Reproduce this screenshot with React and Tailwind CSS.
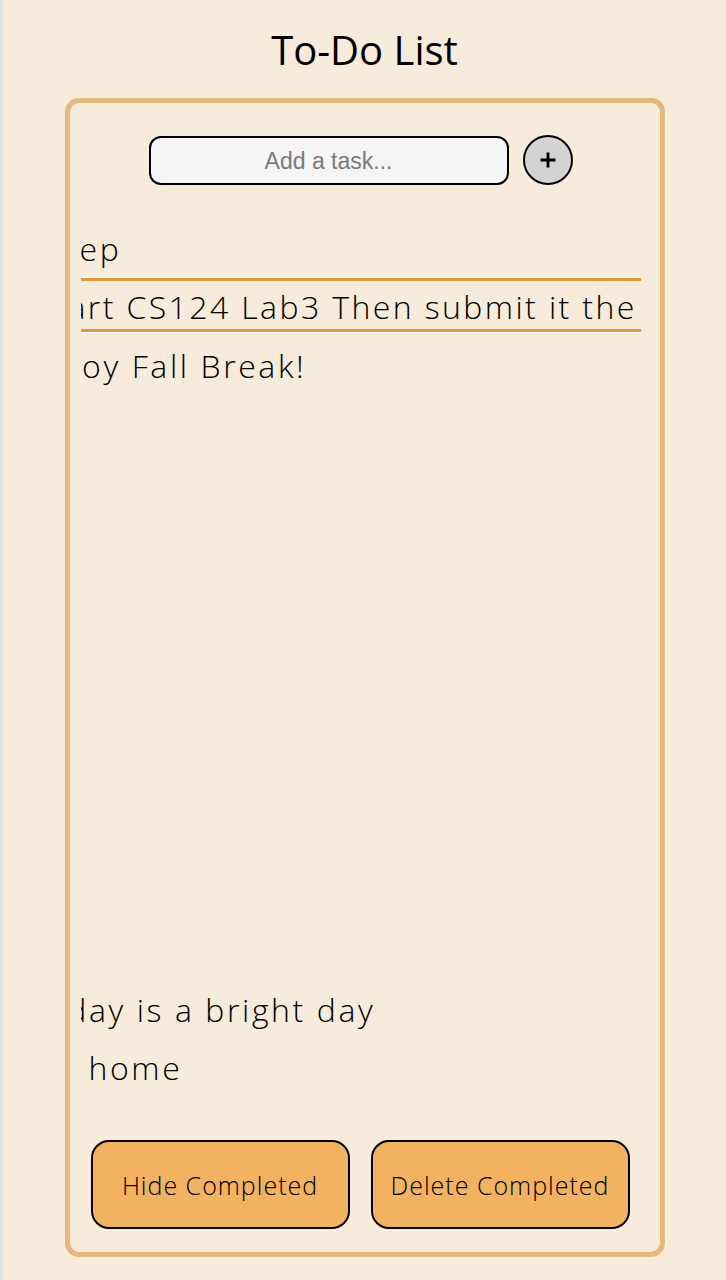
import React, { useState } from "react";

const tasks = [
  { id: 1, text: "Sleep", shift: "ml-[-51px]", row: "h-[57px]" },
  { id: 2, text: "Start CS124 Lab3 Then submit it the", shift: "ml-[-45px]", selected: true },
  { id: 3, text: "Enjoy Fall Break!", shift: "ml-[-50px]", row: "mt-[4px] h-[58px]" },
];

const laterTasks = [
  { id: 4, text: "Today is a bright day", shift: "ml-[-54px]" },
  { id: 5, text: "Go home", shift: "ml-[-50px]" },
];

const font = { fontFamily: "'Open Sans', Lato, sans-serif" };

const TaskRow = ({ task }) => {
  if (task.selected) {
    return (
      <div className="border-y border-white">
        <div className="h-[54px] pt-[3px] border-y-[3px] border-[#dd9a3a] flex items-center overflow-hidden">
          <span className={`whitespace-nowrap text-[32px] font-light tracking-[2.4px] text-black ${task.shift}`}>{task.text}</span>
        </div>
      </div>
    );
  }
  return (
    <div className={`${task.row || "h-[58px]"} flex items-center overflow-hidden`}>
      <span className={`whitespace-nowrap text-[32px] font-light tracking-[2.6px] text-black ${task.shift}`}>{task.text}</span>
    </div>
  );
};

export default function App() {
  const [value, setValue] = useState("");

  return (
    <div className="min-h-screen bg-[#f7ebdb] border-l-[3px] border-[#e2e2e8] pt-[26px] pb-[23px]" style={font}>
      <h1 className="text-center text-[40px] leading-[48px] font-normal text-black">To-Do List</h1>

      <div className="mx-auto mt-[24px] w-[600px] h-[1159px] border-[5px] border-[#e4b87e] rounded-[14px] flex flex-col">
        <div className="flex justify-center items-center gap-[14px] pt-[32px] pr-[8px]">
          <input
            value={value}
            onChange={(e) => setValue(e.target.value)}
            placeholder="Add a task..."
            className="w-[360px] h-[49px] pt-[2px] rounded-[12px] border-2 border-black bg-[#f5f5f5] text-center text-[23px] text-black placeholder:text-[#7a7a7a] outline-none"
            style={{ fontFamily: "'Liberation Sans', Arial, sans-serif" }}
          />
          <button className="w-[50px] h-[50px] rounded-full border-2 border-black bg-[#d3d3d3] flex items-center justify-center">
            <svg width="18" height="18" viewBox="0 0 18 18">
              <path d="M9 1.5v15M1.5 9h15" stroke="black" strokeWidth="2.8" />
            </svg>
          </button>
        </div>

        <div className="ml-[11px] mr-[19px] mt-[35px] flex-1 flex flex-col">
          {tasks.map((t) => (
            <TaskRow key={t.id} task={t} />
          ))}
          <div className="h-[586px]" />
          {laterTasks.map((t) => (
            <TaskRow key={t.id} task={t} />
          ))}
        </div>

        <div className="flex gap-[21px] pl-[21px] pb-[23px]">
          <button className="w-[259px] h-[89px] pt-[3px] rounded-[18px] border-2 border-black bg-[#f2b262] text-[25px] font-light tracking-[1px] text-black">
            Hide Completed
          </button>
          <button className="w-[259px] h-[89px] pt-[3px] rounded-[18px] border-2 border-black bg-[#f2b262] text-[25px] font-light tracking-[1px] text-black">
            Delete Completed
          </button>
        </div>
      </div>
    </div>
  );
}
